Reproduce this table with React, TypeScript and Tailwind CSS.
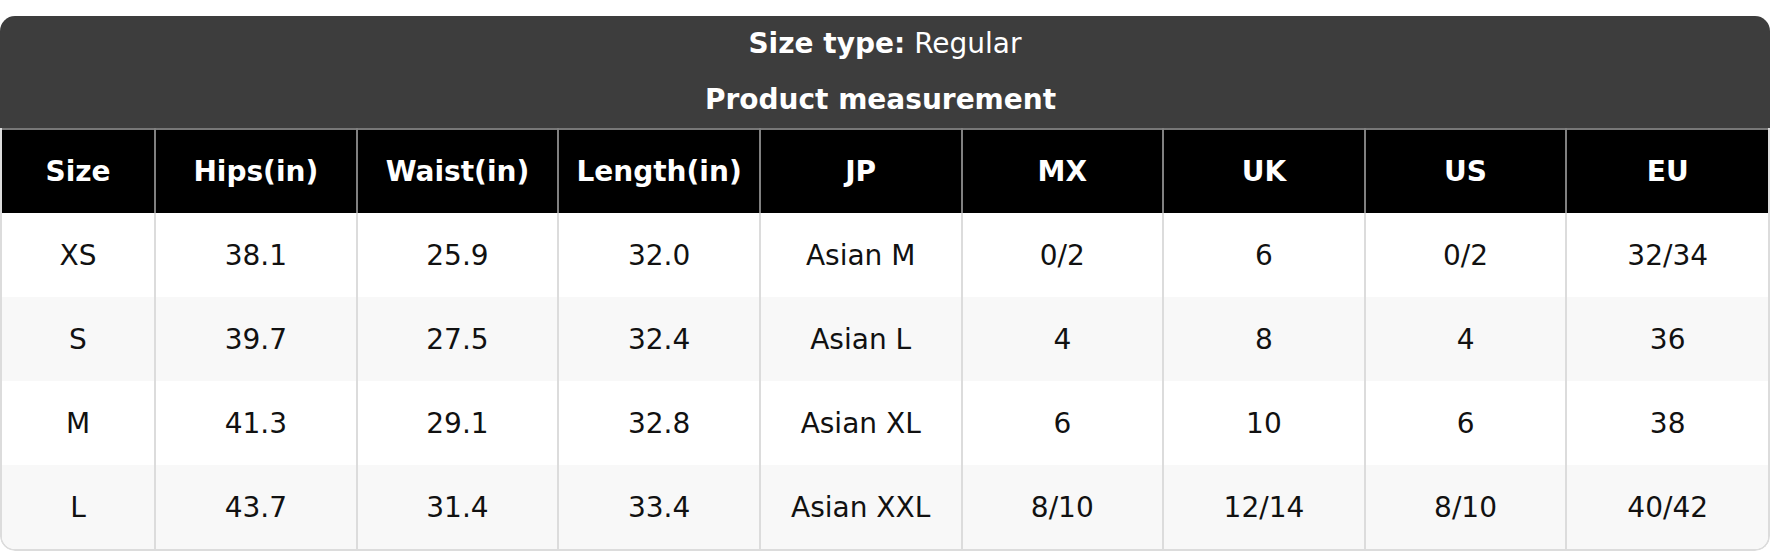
import React from "react";

const headers = ["Size", "Hips(in)", "Waist(in)", "Length(in)", "JP", "MX", "UK", "US", "EU"];
const rows = [
  ["XS", "38.1", "25.9", "32.0", "Asian M", "0/2", "6", "0/2", "32/34"],
  ["S", "39.7", "27.5", "32.4", "Asian L", "4", "8", "4", "36"],
  ["M", "41.3", "29.1", "32.8", "Asian XL", "6", "10", "6", "38"],
  ["L", "43.7", "31.4", "33.4", "Asian XXL", "8/10", "12/14", "8/10", "40/42"],
];

export default function App() {
  return (
    <div
      className="bg-white pt-4 w-[1770px] h-[552px]"
      style={{ fontFamily: '"DejaVu Sans", Verdana, sans-serif' }}
    >
      <div className="rounded-[15px] overflow-hidden">
        <div className="bg-[#3d3d3d] text-white text-[28px]">
          <div className="h-[56px] flex items-center justify-center">
            <span className="font-bold">Size type:</span>
            <span className="ml-[9px]">Regular</span>
          </div>
          <div className="h-[56px] flex items-center justify-center font-bold pr-[9px]">
            Product measurement
          </div>
        </div>
        <div className="border-x-2 border-b-2 border-[#dcdcdc] rounded-b-[15px] overflow-hidden">
          <table className="w-full table-fixed border-collapse text-[28px]">
            <colgroup>
              <col className="w-[153px]" />
              {headers.slice(1).map((h) => (
                <col key={h} />
              ))}
            </colgroup>
            <thead>
              <tr className="bg-black text-white border-t-2 border-[#777777]">
                {headers.map((h, i) => (
                  <th
                    key={h}
                    className={`h-[84px] p-0 font-bold text-center align-middle ${
                      i > 0 ? "border-l-2 border-[#808080]" : ""
                    }`}
                  >
                    {h}
                  </th>
                ))}
              </tr>
            </thead>
            <tbody>
              {rows.map((r, ri) => (
                <tr key={ri} className={ri % 2 === 1 ? "bg-[#f8f8f8]" : "bg-white"}>
                  {r.map((c, ci) => (
                    <td
                      key={ci}
                      className={`h-[84px] p-0 pt-[2px] text-center align-middle text-[#111111] ${
                        ci > 0 ? "border-l-2 border-[#dcdcdc]" : ""
                      }`}
                    >
                      {c}
                    </td>
                  ))}
                </tr>
              ))}
            </tbody>
          </table>
        </div>
      </div>
    </div>
  );
}
